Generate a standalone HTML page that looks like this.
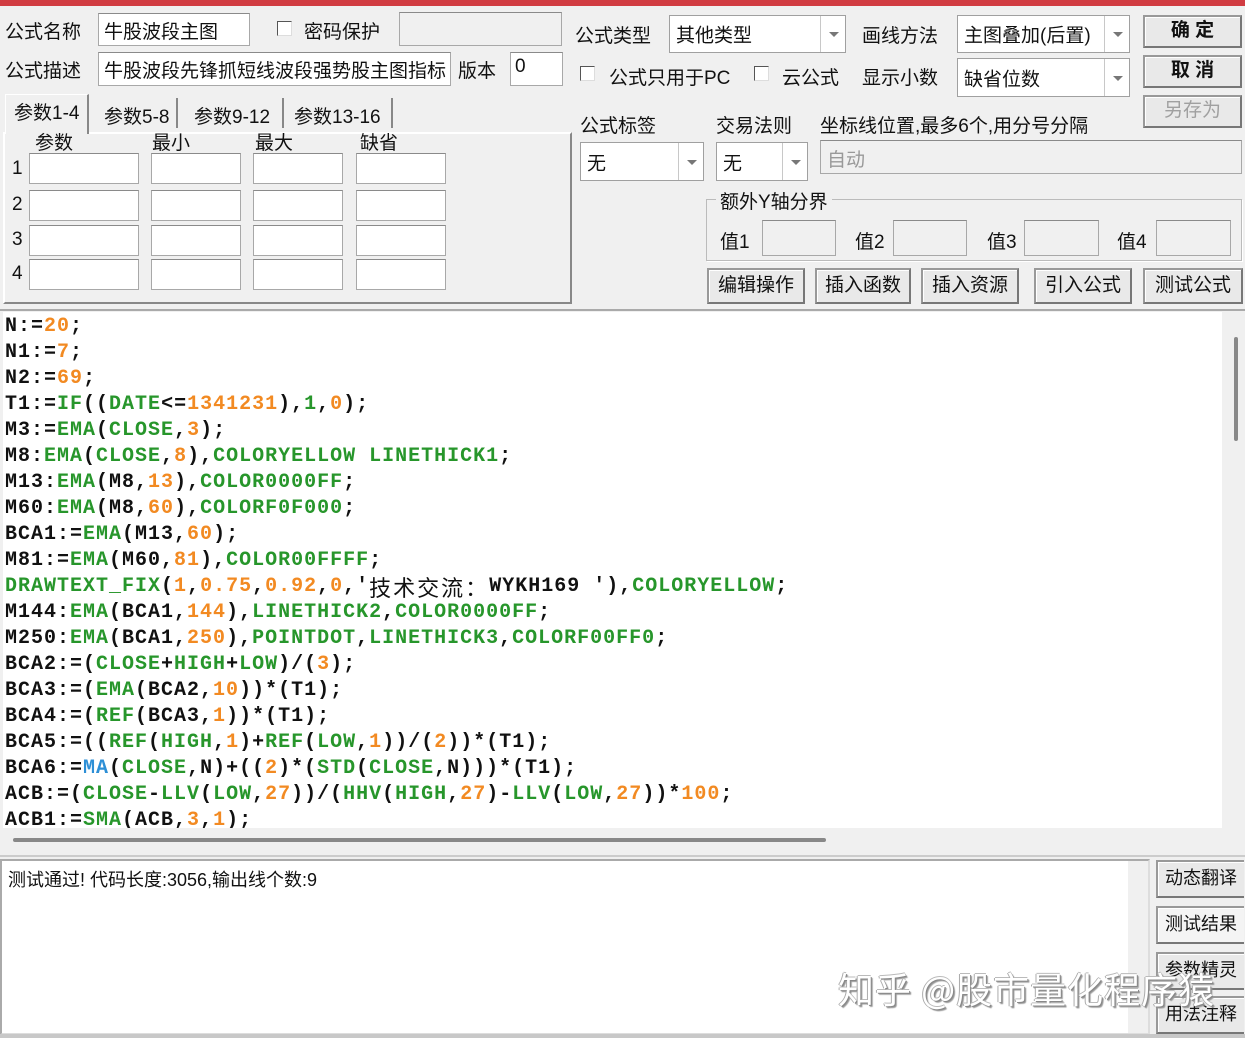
<!DOCTYPE html>
<html><head><meta charset="utf-8"><style>
*{margin:0;padding:0;box-sizing:border-box}
body{width:1245px;height:1038px;background:#f0f0f0;position:relative;overflow:hidden;font-family:"Liberation Sans","Noto Sans CJK SC",sans-serif;font-size:19px;color:#111}
.a{position:absolute;white-space:nowrap}
.in{position:absolute;background:#fff;border:1px solid #a8a8a8;border-top-color:#8a8a8a}
.dis{background:#f0f0f0}
.cb{position:absolute;width:15px;height:15px;background:#fff;border:1px solid #555;border-right-color:#ddd;border-bottom-color:#ddd}
.sel{position:absolute;background:#fff;border:1px solid #a0a0a0}
.sel .t{position:absolute;left:6px;top:50%;transform:translateY(-50%)}
.sel .ar{position:absolute;right:0;top:0;bottom:0;width:25px;border-left:1px solid #c8c8c8}
.sel .ar:after{content:"";position:absolute;left:8px;top:50%;margin-top:-2px;border-left:5px solid transparent;border-right:5px solid transparent;border-top:5px solid #777}
.btn{position:absolute;background:#e9e9e9;border:2px solid #777;border-top-color:#999;border-left-color:#999;text-align:center;font-size:19px;box-shadow:inset 1px 1px 0 #fff}
.code{position:absolute;left:5px;top:314px;font-family:"Liberation Mono","Noto Sans CJK SC",monospace;font-weight:bold;font-size:20px;letter-spacing:1px;line-height:26px;color:#111;white-space:pre}
.g{color:#27962b}.o{color:#f28a22}.b{color:#2d8fd6}
.cj{font-family:"Noto Sans CJK SC",sans-serif;font-weight:normal;letter-spacing:2px;font-size:22px;display:inline-block;height:26px;line-height:26px;vertical-align:top;overflow:visible}
</style></head><body>
<div class="a" style="left:0;top:0;width:1245px;height:6px;background:#d13c42"></div>

<div class="a" style="left:5px;top:17px">公式名称</div>
<div class="in" style="left:98px;top:13px;width:152px;height:33px"></div>
<div class="a" style="left:104px;top:17px">牛股波段主图</div>
<div class="cb" style="left:277px;top:21px"></div>
<div class="a" style="left:304px;top:17px">密码保护</div>
<div class="in dis" style="left:399px;top:12px;width:163px;height:34px"></div>

<div class="a" style="left:5px;top:56px">公式描述</div>
<div class="in" style="left:98px;top:52px;width:353px;height:34px;overflow:hidden"><span class="a" style="left:5px;top:3px">牛股波段先锋抓短线波段强势股主图指标</span></div>
<div class="a" style="left:458px;top:56px">版本</div>
<div class="in" style="left:510px;top:52px;width:53px;height:34px"><span class="a" style="left:4px;top:3px">0</span></div>

<div class="a" style="left:3px;top:132px;width:569px;height:172px;border:2px solid #fff;border-right-color:#888;border-bottom-color:#888"></div>
<div class="a" style="left:5px;top:94px;width:84px;height:40px;background:#f0f0f0;border-right:2px solid #888;border-left:1px solid #fff;border-top:1px solid #fff"></div>
<div class="a" style="left:14px;top:98px">参数1-4</div>
<div class="a" style="left:104px;top:102px">参数5-8</div>
<div class="a" style="left:176px;top:98px;width:2px;height:30px;background:#888"></div>
<div class="a" style="left:194px;top:102px">参数9-12</div>
<div class="a" style="left:282px;top:98px;width:2px;height:30px;background:#888"></div>
<div class="a" style="left:294px;top:102px">参数13-16</div>
<div class="a" style="left:391px;top:98px;width:2px;height:30px;background:#888"></div>

<div class="a" style="left:35px;top:128px">参数</div>
<div class="a" style="left:152px;top:128px">最小</div>
<div class="a" style="left:255px;top:128px">最大</div>
<div class="a" style="left:360px;top:128px">缺省</div>

<div class="a" style="left:12px;top:158px">1</div>
<div class="a" style="left:12px;top:194px">2</div>
<div class="a" style="left:12px;top:229px">3</div>
<div class="a" style="left:12px;top:263px">4</div>
<div class="in" style="left:29px;top:153px;width:110px;height:31px"></div><div class="in" style="left:151px;top:153px;width:90px;height:31px"></div><div class="in" style="left:253px;top:153px;width:90px;height:31px"></div><div class="in" style="left:356px;top:153px;width:90px;height:31px"></div>
<div class="in" style="left:29px;top:190px;width:110px;height:31px"></div><div class="in" style="left:151px;top:190px;width:90px;height:31px"></div><div class="in" style="left:253px;top:190px;width:90px;height:31px"></div><div class="in" style="left:356px;top:190px;width:90px;height:31px"></div>
<div class="in" style="left:29px;top:225px;width:110px;height:31px"></div><div class="in" style="left:151px;top:225px;width:90px;height:31px"></div><div class="in" style="left:253px;top:225px;width:90px;height:31px"></div><div class="in" style="left:356px;top:225px;width:90px;height:31px"></div>
<div class="in" style="left:29px;top:259px;width:110px;height:31px"></div><div class="in" style="left:151px;top:259px;width:90px;height:31px"></div><div class="in" style="left:253px;top:259px;width:90px;height:31px"></div><div class="in" style="left:356px;top:259px;width:90px;height:31px"></div>

<div class="a" style="left:575px;top:21px">公式类型</div>
<div class="sel" style="left:669px;top:15px;width:177px;height:38px"><span class="t">其他类型</span><span class="ar"></span></div>
<div class="a" style="left:862px;top:21px">画线方法</div>
<div class="sel" style="left:957px;top:15px;width:173px;height:38px"><span class="t">主图叠加(后置)</span><span class="ar"></span></div>
<div class="btn" style="left:1143px;top:15px;width:99px;height:33px;line-height:28px;font-weight:bold">确 定</div>
<div class="btn" style="left:1143px;top:55px;width:99px;height:33px;line-height:28px;font-weight:bold">取 消</div>
<div class="btn" style="left:1143px;top:95px;width:99px;height:33px;line-height:28px;color:#a0a0a0">另存为</div>

<div class="cb" style="left:580px;top:66px"></div>
<div class="a" style="left:609px;top:63px">公式只用于PC</div>
<div class="cb" style="left:754px;top:66px"></div>
<div class="a" style="left:782px;top:63px">云公式</div>
<div class="a" style="left:862px;top:63px">显示小数</div>
<div class="sel" style="left:957px;top:58px;width:173px;height:39px"><span class="t">缺省位数</span><span class="ar"></span></div>

<div class="a" style="left:580px;top:111px">公式标签</div>
<div class="a" style="left:716px;top:111px">交易法则</div>
<div class="a" style="left:820px;top:111px">坐标线位置,最多6个,用分号分隔</div>
<div class="sel" style="left:580px;top:142px;width:124px;height:39px"><span class="t">无</span><span class="ar"></span></div>
<div class="sel" style="left:716px;top:142px;width:92px;height:39px"><span class="t">无</span><span class="ar"></span></div>
<div class="in dis" style="left:820px;top:140px;width:422px;height:34px"><span class="a" style="left:6px;top:4px;color:#999">自动</span></div>

<div class="a" style="left:706px;top:199px;width:536px;height:62px;border:1px solid #bbb;box-shadow:1px 1px 0 #fff"></div>
<div class="a" style="left:716px;top:187px;background:#f0f0f0;padding:0 4px">额外Y轴分界</div>
<div class="a" style="left:720px;top:227px">值1</div><div class="in" style="left:762px;top:220px;width:74px;height:36px;background:#f0f0f0"></div>
<div class="a" style="left:855px;top:227px">值2</div><div class="in" style="left:893px;top:220px;width:74px;height:36px;background:#f0f0f0"></div>
<div class="a" style="left:987px;top:227px">值3</div><div class="in" style="left:1024px;top:220px;width:75px;height:36px;background:#f0f0f0"></div>
<div class="a" style="left:1117px;top:227px">值4</div><div class="in" style="left:1156px;top:220px;width:75px;height:36px;background:#f0f0f0"></div>

<div class="btn" style="left:707px;top:268px;width:98px;height:36px;line-height:31px">编辑操作</div>
<div class="btn" style="left:815px;top:268px;width:96px;height:36px;line-height:31px">插入函数</div>
<div class="btn" style="left:921px;top:268px;width:98px;height:36px;line-height:31px">插入资源</div>
<div class="btn" style="left:1034px;top:268px;width:98px;height:36px;line-height:31px">引入公式</div>
<div class="btn" style="left:1143px;top:268px;width:100px;height:36px;line-height:31px">测试公式</div>

<div class="a" style="left:0;top:309px;width:1245px;height:548px;border-top:2px solid #aaa;border-bottom:2px solid #ccc"></div>
<div class="a" style="left:3px;top:312px;width:1219px;height:516px;background:#fff"></div>
<div class="a" style="left:1234px;top:337px;width:4px;height:104px;background:#888;border-radius:2px"></div>
<div class="a" style="left:13px;top:838px;width:813px;height:4px;background:#888;border-radius:2px"></div>
<div class="code" style="height:514px;overflow:hidden;width:1215px">N:=<span class="o">20</span>;
N1:=<span class="o">7</span>;
N2:=<span class="o">69</span>;
T1:=<span class="g">IF</span>((<span class="g">DATE</span>&lt;=<span class="o">1341231</span>),<span class="g">1</span>,<span class="o">0</span>);
M3:=<span class="g">EMA</span>(<span class="g">CLOSE</span>,<span class="o">3</span>);
M8:<span class="g">EMA</span>(<span class="g">CLOSE</span>,<span class="o">8</span>),<span class="g">COLORYELLOW LINETHICK1</span>;
M13:<span class="g">EMA</span>(M8,<span class="o">13</span>),<span class="g">COLOR0000FF</span>;
M60:<span class="g">EMA</span>(M8,<span class="o">60</span>),<span class="g">COLORF0F000</span>;
BCA1:=<span class="g">EMA</span>(M13,<span class="o">60</span>);
M81:=<span class="g">EMA</span>(M60,<span class="o">81</span>),<span class="g">COLOR00FFFF</span>;
<span class="g">DRAWTEXT_FIX</span>(<span class="o">1</span>,<span class="o">0.75</span>,<span class="o">0.92</span>,<span class="o">0</span>,'<span class="cj">技术交流：</span>WYKH169 '),<span class="g">COLORYELLOW</span>;
M144:<span class="g">EMA</span>(BCA1,<span class="o">144</span>),<span class="g">LINETHICK2</span>,<span class="g">COLOR0000FF</span>;
M250:<span class="g">EMA</span>(BCA1,<span class="o">250</span>),<span class="g">POINTDOT</span>,<span class="g">LINETHICK3</span>,<span class="g">COLORF00FF0</span>;
BCA2:=(<span class="g">CLOSE</span>+<span class="g">HIGH</span>+<span class="g">LOW</span>)/(<span class="o">3</span>);
BCA3:=(<span class="g">EMA</span>(BCA2,<span class="o">10</span>))*(T1);
BCA4:=(<span class="g">REF</span>(BCA3,<span class="o">1</span>))*(T1);
BCA5:=((<span class="g">REF</span>(<span class="g">HIGH</span>,<span class="o">1</span>)+<span class="g">REF</span>(<span class="g">LOW</span>,<span class="o">1</span>))/(<span class="o">2</span>))*(T1);
BCA6:=<span class="b">MA</span>(<span class="g">CLOSE</span>,N)+((<span class="o">2</span>)*(<span class="g">STD</span>(<span class="g">CLOSE</span>,N)))*(T1);
ACB:=(<span class="g">CLOSE</span>-<span class="g">LLV</span>(<span class="g">LOW</span>,<span class="o">27</span>))/(<span class="g">HHV</span>(<span class="g">HIGH</span>,<span class="o">27</span>)-<span class="g">LLV</span>(<span class="g">LOW</span>,<span class="o">27</span>))*<span class="o">100</span>;
ACB1:=<span class="g">SMA</span>(ACB,<span class="o">3</span>,<span class="o">1</span>);</div>

<div class="a" style="left:0;top:859px;width:1150px;height:176px;border:2px solid #aaa;border-right-color:#ddd;border-bottom-color:#ddd;background:#fff"></div>
<div class="a" style="left:1128px;top:861px;width:20px;height:172px;background:#f0f0f0"></div>
<div class="a" style="left:8px;top:866px;font-size:18px">测试通过! 代码长度:3056,输出线个数:9</div>
<div class="a" style="left:0;top:1034px;width:1245px;height:4px;background:#c8c8c8"></div>

<div class="btn" style="left:1156px;top:860px;width:88px;height:38px;line-height:33px;font-size:18px;border-right:none">动态翻译</div>
<div class="btn" style="left:1156px;top:906px;width:88px;height:38px;line-height:33px;font-size:18px;border-right:none;background:#f4f4f4">测试结果</div>
<div class="btn" style="left:1156px;top:952px;width:88px;height:38px;line-height:33px;font-size:18px;border-right:none">参数精灵</div>
<div class="btn" style="left:1156px;top:996px;width:88px;height:38px;line-height:33px;font-size:18px;border-right:none">用法注释</div>

<div class="a" style="left:838px;top:962px;font-size:36px;letter-spacing:1px;color:#fff;font-family:'Noto Sans CJK SC',sans-serif;text-shadow:1px 1px 0 #888,-1px 0 0 #aaa,0 -1px 0 #bbb,2px 2px 1px #999">知乎 @股市量化程序猿</div>
</body></html>
